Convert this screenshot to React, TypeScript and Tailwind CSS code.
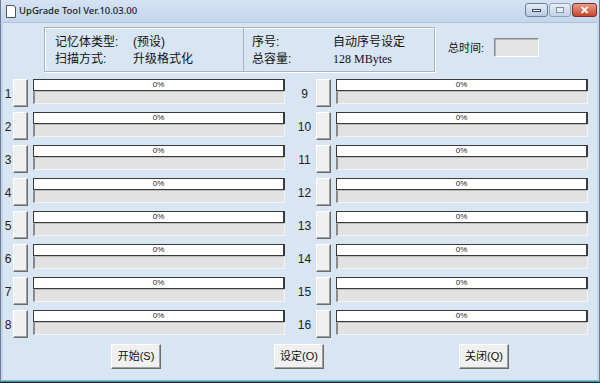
import React from "react";

const cjk = { fontFamily: '"Liberation Sans", "Noto Sans CJK SC", sans-serif' };

function Slot({ n, right }: { n: number; right?: boolean }) {
  return (
    <div className="flex items-start h-[33px]">
      <div
        className={
          "h-[28px] flex items-center justify-center pt-[2px] text-[12px] text-[#222] " +
          (right ? "w-[27px] pl-[4px]" : "w-[10px]")
        }
      >
        {n}
      </div>
      <div className="w-[15px] h-[28px] bg-[#f0f0f0] border border-t-white border-l-white border-r-[#6b6b6b] border-b-[#6b6b6b] shadow-[inset_-1px_-1px_0_#a0a0a0]" />
      <div className="ml-[5px] w-[252px] flex flex-col">
        <div className="h-[12px] bg-white border border-[#3a3a3a] border-r-2 flex items-center justify-center text-[8px] leading-none text-[#222]">
          0%
        </div>
        <div className="h-[13px] bg-[#e2e2e2] border-l-2 border-t border-l-[#8a8a8a] border-t-[#bdbdbd] border-r border-b border-r-[#f4f4f4] border-b-[#f4f4f4]" />
      </div>
    </div>
  );
}

function Btn({ label }: { label: string }) {
  return (
    <div className="w-[50px] h-[25px] bg-[#f0f0f0] border border-t-white border-l-white border-r-[#6b6b6b] border-b-[#6b6b6b] shadow-[inset_-1px_-1px_0_#a0a0a0] flex items-center justify-center text-[11px] text-[#111]">
      {label}
    </div>
  );
}

export default function App() {
  return (
    <div className="w-[600px] h-[383px] bg-[#0f2a3a] overflow-hidden" style={cjk}>
      <div className="w-[600px] h-[382px] flex flex-col bg-[#c4d6eb] border-l border-r border-b border-[#6d7d8d]">
        {/* title bar */}
        <div className="h-[22px] flex items-center bg-gradient-to-b from-[#d5e3f3] to-[#c3d6ec]">
          <div className="ml-[5px] w-[10px] h-[13px] bg-white border border-[#555] rounded-tr-[3px]" />
          <span className="ml-[3px] text-[9.5px] font-medium text-[#1a1a1a]" style={{ fontFamily: '"Noto Sans", "Liberation Sans", sans-serif' }}>
            UpGrade Tool Ver.10.03.00
          </span>
          <div className="ml-auto mr-[2px] flex gap-[1px] self-start mt-[3px]">
            <div className="w-[23px] h-[14px] rounded-[3px] border border-[#6a7d95] bg-gradient-to-b from-[#e6eef8] to-[#b7c9df] flex items-center justify-center">
              <div className="w-[9px] h-[3px] bg-white border border-[#445]" />
            </div>
            <div className="w-[22px] h-[14px] rounded-[3px] border border-[#8fa2b8] bg-gradient-to-b from-[#e6eef8] to-[#c4d3e5] flex items-center justify-center">
              <div className="w-[8px] h-[6px] border border-[#8090a0] bg-[#e8eef5]" />
            </div>
            <div className="w-[25px] h-[14px] rounded-[3px] border border-[#7a3025] bg-gradient-to-b from-[#e79a88] to-[#c4442c] flex items-center justify-center text-white text-[11px] font-bold leading-none">
              ✕
            </div>
          </div>
        </div>
        {/* client */}
        <div className="flex-1 mx-[2px] bg-[#d8e5f3] border-t border-[#b0c2d6] flex flex-col">
          <div className="flex items-start mt-[4px]">
            <div className="ml-[41px] w-[391px] h-[45px] border border-[#a9b4c0] shadow-[inset_1px_1px_0_#fff,1px_1px_0_#fff] flex">
              <div className="w-[199px] border-r border-[#a9b4c0] pl-[10px] pt-[6px] text-[12px] text-[#111] leading-[17px]">
                <div className="flex"><span className="w-[78px]">记忆体类型:</span><span>(预设)</span></div>
                <div className="flex"><span className="w-[78px]">扫描方式:</span><span>升级格式化</span></div>
              </div>
              <div className="pl-[8px] pt-[6px] text-[12px] text-[#111] leading-[17px]">
                <div className="flex"><span className="w-[81px]">序号:</span><span>自动序号设定</span></div>
                <div className="flex"><span className="w-[81px]">总容量:</span><span className="text-[12px]" style={{ fontFamily: '"Liberation Serif", serif' }}>128 MBytes</span></div>
              </div>
            </div>
            <span className="ml-[13px] mt-[13px] text-[11px] text-[#111]">总时间:</span>
            <div className="ml-[10px] mt-[11px] w-[45px] h-[19px] bg-[#e4e4e4] border border-t-[#8a8a8a] border-l-[#8a8a8a] border-r-white border-b-white shadow-[inset_1px_1px_0_#b5b5b5]" />
          </div>
          <div className="flex mt-[7px]">
            <div className="flex flex-col">
              {[1, 2, 3, 4, 5, 6, 7, 8].map((n) => (
                <Slot key={n} n={n} />
              ))}
            </div>
            <div className="flex flex-col ml-[4px]">
              {[9, 10, 11, 12, 13, 14, 15, 16].map((n) => (
                <Slot key={n} n={n} right />
              ))}
            </div>
          </div>
          <div className="flex mt-[1px]">
            <div className="ml-[108px]"><Btn label="开始(S)" /></div>
            <div className="ml-[113px]"><Btn label="设定(O)" /></div>
            <div className="ml-[135px]"><Btn label="关闭(Q)" /></div>
          </div>
        </div>
        <div className="h-[1px] bg-[#5ac8e8] mx-[1px]" />
      </div>
    </div>
  );
}
